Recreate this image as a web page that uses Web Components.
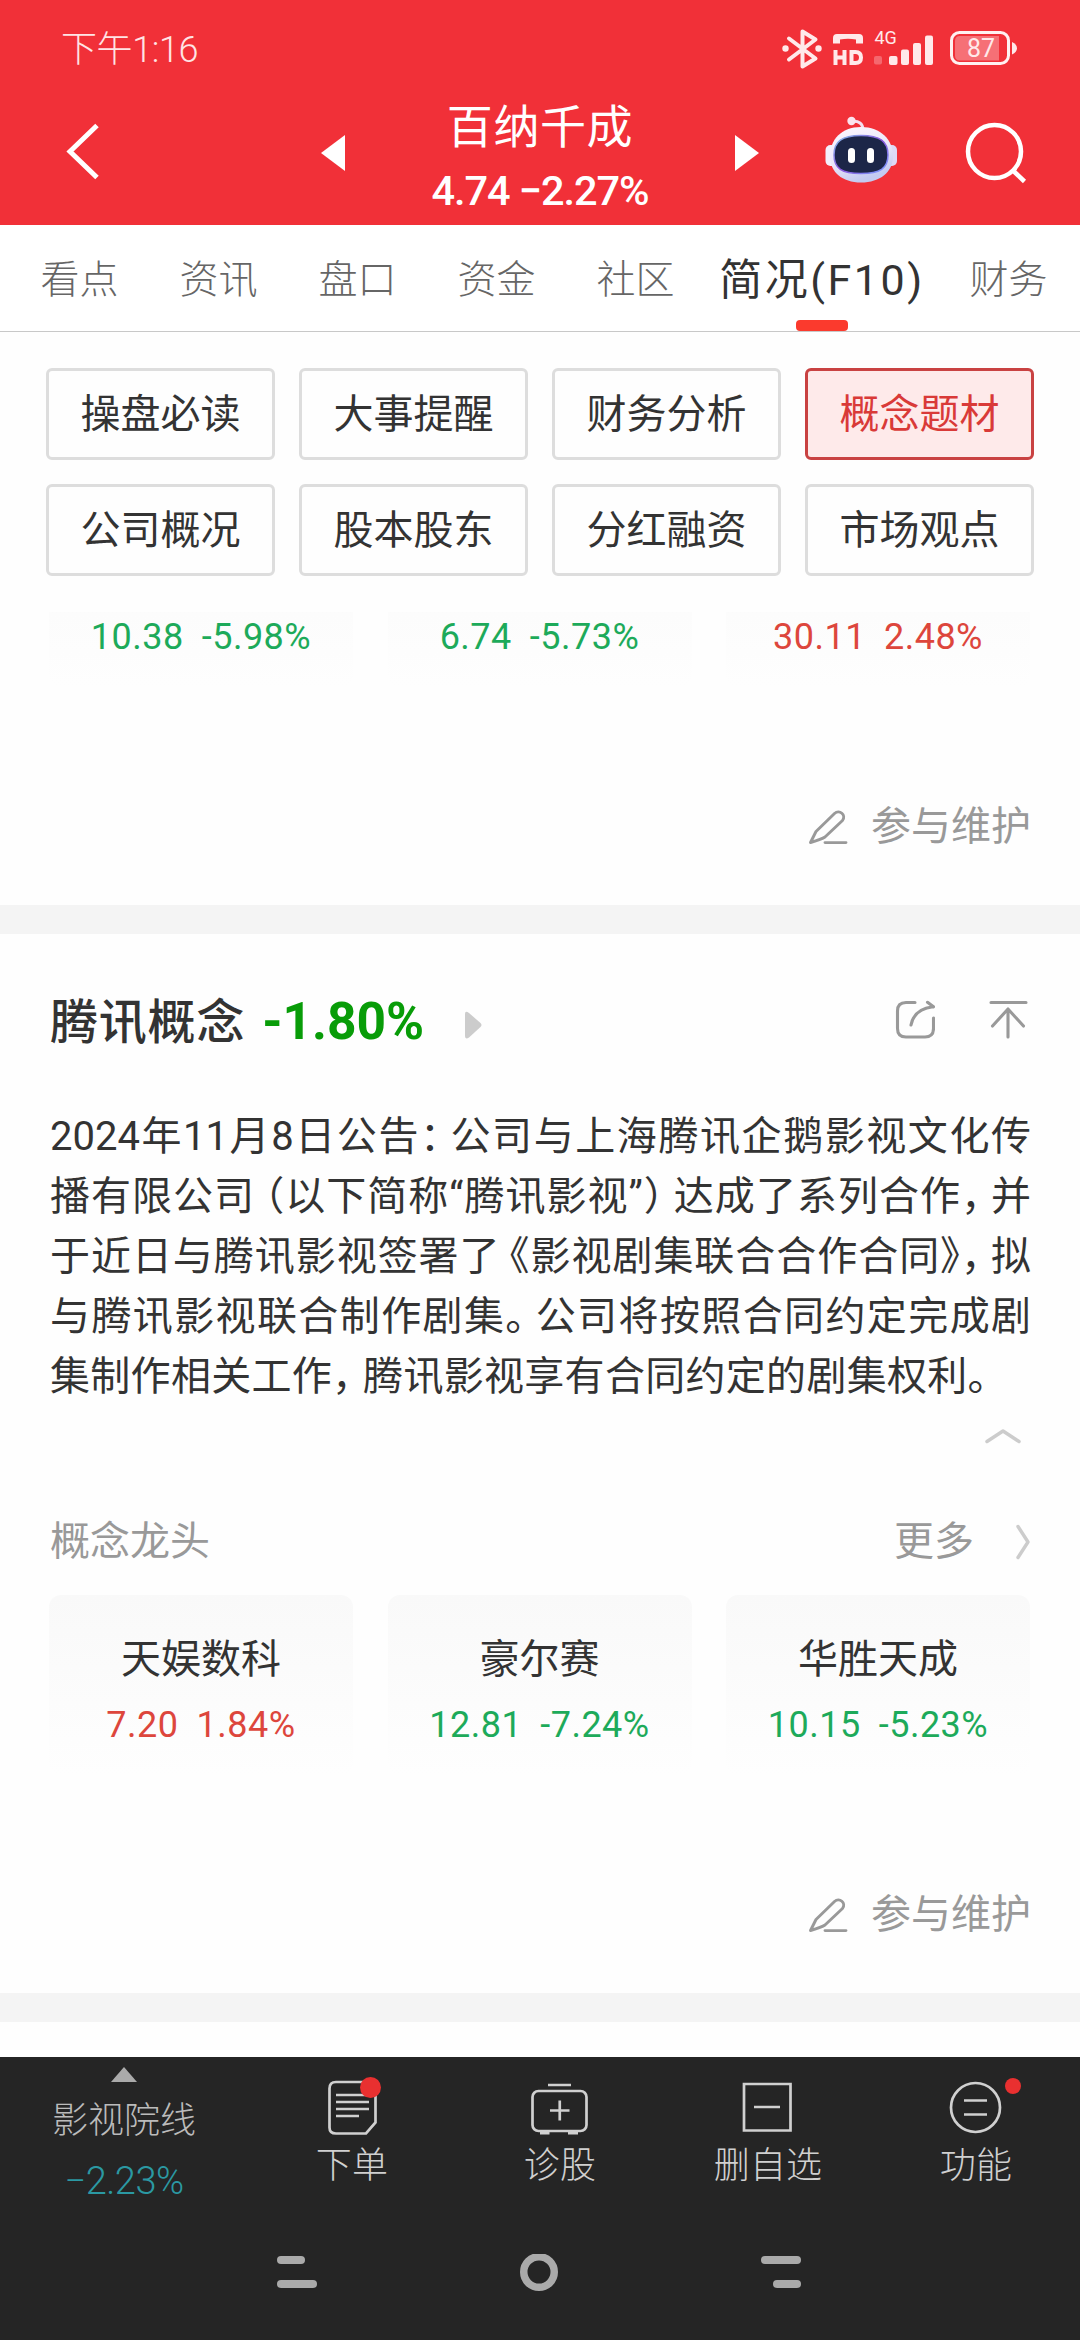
<!DOCTYPE html>
<html lang="zh-CN">
<head>
<meta charset="utf-8">
<title>百纳千成</title>
<style>
html,body{margin:0;padding:0}
body{width:1080px;height:2340px;overflow:hidden;background:#fefefe;color:#333;font-family:Roboto,"Noto Sans CJK SC",sans-serif}
</style>
</head>
<body>
<stock-app></stock-app>
<script>
const define = (name, html) => {
  const t = document.createElement('template');
  t.innerHTML = '<style>*{box-sizing:border-box}svg{display:block;flex:none}</style>' + html;
  customElements.define(name, class extends HTMLElement {
    constructor() {
      super();
      this.attachShadow({ mode: 'open' }).appendChild(t.content.cloneNode(true));
    }
  });
};

define('status-bar', `
<style>
:host{display:flex;height:98px;align-items:center;justify-content:space-between;padding:0 62px 0 61px;color:#ffe4e5;background:#f13038}
.time{font-size:36px;line-height:50px;font-weight:300;letter-spacing:-.4px;padding-top:1px}
text{font-family:Roboto,sans-serif}
</style>
<div class="time">下午1:16</div>
<svg width="236" height="44" viewBox="782 27 236 44" fill="#ffe9ea">
  <path d="M789 38.500 815.500 58.500 802.500 66.500V31.500L815.500 39.500 789 59.500" fill="none" stroke="#ffe9ea" stroke-width="4" stroke-linejoin="round" stroke-linecap="round"/>
  <circle cx="785.500" cy="48.500" r="3.200"/><circle cx="818.500" cy="48.500" r="3.200"/>
  <path d="M833 43.500V38q0-4 4-4h22q4 0 4 4v5.500h-7V39.500q-8-1.500-16 0v4z"/>
  <path d="M835.500 50v15M844.500 50v15M835.500 57.500h9M851.500 52v11h4q5.500 0 5.500-5.500t-5.500-5.500z" fill="none" stroke="#ffe9ea" stroke-width="4"/>
  <text x="874.500" y="43.500" font-size="18">4G</text>
  <rect x="874" y="56" width="8" height="8.500" rx="2" opacity=".3"/>
  <rect x="889" y="56" width="8.500" height="9" rx="2"/><rect x="901" y="49.500" width="8" height="15.500" rx="2"/><rect x="913" y="43" width="8" height="22" rx="2"/><rect x="925" y="35.500" width="8" height="29.500" rx="2"/>
  <rect x="951.500" y="32.500" width="57" height="31" rx="8" fill="none" stroke="#fff1f1" stroke-width="3"/>
  <path d="M955 41q0-5 5-5h39v24.500h-39q-5 0-5-5z" opacity=".35"/>
  <path d="M1012 42q5 2.500 5 6.300t-5 6.300z"/>
  <text x="967" y="57" font-size="25" textLength="28" lengthAdjust="spacingAndGlyphs">87</text>
</svg>`);

define('title-bar', `
<style>
:host{display:flex;height:127px;background:#f13038;color:#fff}
.back{width:321px;padding:23px 0 0 65px}
.prev{width:93px;padding-top:37px}
.mid{width:252px;padding-top:1px;text-align:center;white-space:nowrap}
.name{font-size:46px;line-height:56px;letter-spacing:.6px}
.price{font-size:41.500px;font-weight:500;line-height:60px;margin-top:6px;letter-spacing:-1.050px}
.next{width:92px;padding:37px 0 0 69px}
.robot{width:142px;padding:18px 0 0 66px}
.find{padding:24px 0 0 65px}
</style>
<div class="back"><svg width="36" height="62" viewBox="0 0 36 62" fill="none" stroke="#fff" stroke-width="5"><path d="M32 4.500 5 30.500l27 26"/></svg></div>
<div class="prev"><svg width="24" height="36"><path d="M24 0v36L0 18z" fill="#fff"/></svg></div>
<div class="mid"><div class="name">百纳千成</div><div class="price">4.74 −2.27%</div></div>
<div class="next"><svg width="24" height="36"><path d="M0 0v36l24-18z" fill="#fff"/></svg></div>
<div class="robot"><svg width="74" height="70" viewBox="824 116 74 70">
  <defs><linearGradient id="h" x1="0" y1="0" x2=".4" y2="1"><stop offset="0" stop-color="#fdf8ff"/><stop offset=".6" stop-color="#ebe6f8"/><stop offset="1" stop-color="#c3caf1"/></linearGradient>
  <linearGradient id="r" x1="0" y1="0" x2="1" y2="1"><stop offset="0" stop-color="#83bfe8"/><stop offset=".5" stop-color="#8a55dd"/><stop offset="1" stop-color="#7aa0ff"/></linearGradient></defs>
  <path d="M851 121.500q12-1.500 12 9" fill="none" stroke="#f4dff0" stroke-width="3"/><circle cx="851.500" cy="121" r="4.200" fill="#fbe3ee"/>
  <rect x="825.500" y="145" width="12" height="21" rx="5" fill="#f3effb"/><rect x="885" y="145" width="12" height="21" rx="5" fill="#ded9f6"/>
  <path d="M861 127c20 0 32 13 32 29s-13 26.500-32 26.500-31-10.500-31-26.500 11-29 31-29z" fill="url(#h)"/>
  <path d="M861 135.500c19 0 27 6 27 19.500s-8 18.500-27 18.500-27-5-27-18.500 8-19.500 27-19.500z" fill="#1c2648" stroke="url(#r)" stroke-width="1.500"/>
  <rect x="848" y="148" width="7" height="15" rx="3.500" fill="#fff"/><rect x="867" y="148" width="7" height="15" rx="3.500" fill="#fff"/>
</svg></div>
<div class="find"><svg width="62" height="62" viewBox="965 122 62 62" fill="none" stroke="#fff" stroke-width="4.500"><circle cx="994.500" cy="151.500" r="26.500"/><path d="M1013 170.500l11.500 11"/></svg></div>`);

define('nav-tab', `
<style>
:host{display:flex;flex-direction:column;align-items:center;width:139px;height:106px;padding-top:30px;font-size:39px;font-weight:300;line-height:50px;color:#666;white-space:nowrap}
:host([on]){width:234px;font-size:43px;font-weight:400;color:#333;letter-spacing:2.500px}
i{display:none;width:52px;height:11px;margin-top:15px;border-radius:4px;background:#fb3a2d}
:host([on]) i{display:block}
</style><slot></slot><i></i>`);

define('nav-tabs', `
<style>:host{display:flex;height:107px;padding-left:10px;border-bottom:1px solid #c8c8c8;background:#fff;overflow:hidden;box-sizing:border-box}
nav-tab{flex:none;box-sizing:border-box}</style>
<nav-tab>看点</nav-tab><nav-tab>资讯</nav-tab><nav-tab>盘口</nav-tab><nav-tab>资金</nav-tab><nav-tab>社区</nav-tab><nav-tab on>简况(F10)</nav-tab><nav-tab>财务</nav-tab>`);

define('menu-button', `
<style>
:host{display:block;width:229px;height:92px;border:3px solid #ddd;border-radius:6px;text-align:center;font-size:40px;line-height:88px;color:#333;box-sizing:border-box}
:host([on]){border-color:#c94242;background:#feeaea;color:#d93a38}
</style><slot></slot>`);

define('f10-menu', `
<style>:host{display:grid;height:280px;padding:36px 46px;grid-template-columns:repeat(4,229px);justify-content:space-between;row-gap:24px;background:#fefefe;box-sizing:border-box}</style>
<menu-button>操盘必读</menu-button><menu-button>大事提醒</menu-button><menu-button>财务分析</menu-button><menu-button on>概念题材</menu-button>
<menu-button>公司概况</menu-button><menu-button>股本股东</menu-button><menu-button>分红融资</menu-button><menu-button>市场观点</menu-button>`);

define('stock-card', `
<style>
:host{display:block;width:304px;height:180px;padding-top:35px;border-radius:12px;background:linear-gradient(#f9f9f9,#fefefe);text-align:center;color:#1daa5a;box-sizing:border-box}
:host([up]){color:#dd463c}
.n{height:60px;font-size:40px;line-height:60px;color:#333}
.p{display:flex;justify-content:center;gap:18px;margin-top:15px;font-size:36px;line-height:40px;letter-spacing:.5px}
</style>
<div class="n"><slot name="name"></slot></div>
<div class="p"><slot name="price"></slot><slot name="change"></slot></div>`);

define('card-row', `<style>:host{display:flex;justify-content:space-between;padding:0 50px 0 49px}</style><slot></slot>`);

define('maintain-link', `
<style>:host{display:flex;justify-content:flex-end;align-items:center;gap:23px;margin-top:110px;height:108px;padding:0 49px 48px 0;font-size:40px;line-height:60px;color:#999;box-sizing:border-box}</style>
<svg width="40" height="36" viewBox="0 0 40 36" fill="none" stroke="#999" stroke-width="2.900" stroke-linejoin="round" stroke-linecap="round"><path d="M2.500 33.500 8 22.500 26.500 4.500C31.500 0 38.500 6 34.500 11.500L17 28Q14 30 2.500 33.500zM17 33.600h21"/></svg>
<span>参与维护</span>`);

define('concept-head', `
<style>
:host{display:flex;align-items:center;height:64px;padding:0 52px 0 50px;margin-top:57px}
b{font-size:48px;font-weight:500;letter-spacing:.8px;line-height:64px}
.c{font-size:51.500px;font-weight:700;letter-spacing:0;line-height:60px;color:#089c08;margin:-2px auto 0 17px;display:flex;align-items:center;gap:41px}
.c svg{margin-top:6px}
.i{display:flex;gap:54px;margin-top:-6px}
</style>
<b><slot></slot></b>
<div class="c"><slot name="change"></slot><svg width="17" height="28"><path d="M0 3Q0-1 4 2L15.500 12Q17.500 14 15.500 16L4 26.500Q0 29 0 25z" fill="#ccc"/></svg></div>
<div class="i" >
<svg width="40" height="40" viewBox="895 1000 40 40" fill="none" stroke="#999" stroke-width="3.100" stroke-linecap="round" stroke-linejoin="round"><path d="M915 1002.500h-9q-8.500 0-8.500 8.500v17.500q0 8.500 8.500 8.500h19q8.500 0 8.500-8.500V1018M911 1025q3-16 22-18.200M927.500 1002.300l6 4.500"/></svg>
<svg width="39" height="40" viewBox="989 1000 39 40" fill="none" stroke="#999" stroke-width="3.100" stroke-linecap="round" stroke-linejoin="round"><path d="M991 1002.500h35M992.500 1026l15.500-17 15.500 17M1008 1009.500V1037"/></svg>
</div>`);

define('notice-text', `
<style>
:host{display:block;margin-top:52px;padding:0 49px 0 50px;font-size:40px;line-height:60px;color:#333;font-feature-settings:"halt"}
p{margin:0;height:60px;text-align:justify;text-align-last:justify;white-space:nowrap}
p.end{text-align-last:left;letter-spacing:.3px}
s{text-decoration:none;letter-spacing:9px}
.end s{letter-spacing:11px}
u{text-decoration:none;margin-left:9px}
.t{letter-spacing:0}
.up{display:flex;justify-content:flex-end;align-items:center;height:57px;padding-right:10px}
</style>
<p>2024年11月8日公告<s>：</s>公司与上海腾讯企鹅影视文化传</p>
<p>播有限公司<u>（</u>以下简称“腾讯影视”<s>）</s>达成了系列合作<s>，</s>并</p>
<p>于近日与腾讯影视签署了<u>《</u>影视剧集联合合作合同<s class="t">》</s><s>，</s>拟</p>
<p>与腾讯影视联合制作剧集<s>。</s>公司将按照合同约定完成剧</p>
<p class="end">集制作相关工作<s>，</s>腾讯影视享有合同约定的剧集权利<s>。</s></p>
<div class="up"><svg width="36" height="16" viewBox="0 0 36 16" fill="none" stroke="#ccc" stroke-width="3.500" stroke-linecap="round" stroke-linejoin="round"><path d="M2 13.500 18 3l16 10.500"/></svg></div>`);

define('leaders-head', `
<style>:host{display:flex;align-items:center;height:60px;margin:48px 0 23px;padding:0 50px;font-size:40px;line-height:60px;color:#999}
.a{margin-right:auto}svg{margin-left:42px}</style>
<span class="a">概念龙头</span><span>更多</span>
<svg width="14" height="36" viewBox="0 0 14 36" fill="none" stroke="#ccc" stroke-width="3.400" stroke-linecap="round" stroke-linejoin="round"><path d="M2 2.500 12 18 2 33.500"/></svg>`);

define('section-gap', `<style>:host{display:block;height:29px;background:#f4f4f4}</style>`);

define('page-content', `
<style>:host{display:block;height:1445px;overflow:hidden;background:#fefefe}.first{margin-top:-105px}.rest{height:1059px;overflow:hidden}</style>
<div class="first">
<card-row>
<stock-card><span slot="price">10.38</span><span slot="change">-5.98%</span></stock-card>
<stock-card><span slot="price">6.74</span><span slot="change">-5.73%</span></stock-card>
<stock-card up><span slot="price">30.11</span><span slot="change">2.48%</span></stock-card>
</card-row>
<maintain-link></maintain-link>
</div>
<section-gap></section-gap>
<div class="rest">
<concept-head>腾讯概念<span slot="change">-1.80%</span></concept-head>
<notice-text></notice-text>
<leaders-head></leaders-head>
<card-row>
<stock-card up><span slot="name">天娱数科</span><span slot="price">7.20</span><span slot="change">1.84%</span></stock-card>
<stock-card><span slot="name">豪尔赛</span><span slot="price">12.81</span><span slot="change">-7.24%</span></stock-card>
<stock-card><span slot="name">华胜天成</span><span slot="price">10.15</span><span slot="change">-5.23%</span></stock-card>
</card-row>
<maintain-link></maintain-link>
</div>
<section-gap></section-gap>`);

define('tool-item', `
<style>:host{display:flex;flex-direction:column;align-items:center;width:208px;font-size:36px;font-weight:300;line-height:48px;letter-spacing:.2px;color:#d0d0d0;padding-top:19px;box-sizing:border-box}
.t{margin-top:4px}</style><slot name="icon"></slot><div class="t"><slot></slot></div>`);

define('tool-bar', `
<style>
:host{display:flex;height:148px;background:#252525}
.idx{width:248px;padding-top:10px;display:flex;flex-direction:column;align-items:center;font-size:36px;font-weight:300;line-height:48px;color:#bbb}
.idx .n{margin-top:15px}.idx .v{margin-top:9px;font-size:38px;line-height:54px;letter-spacing:-.5px;color:#2b99a3}
svg{display:block;fill:none;stroke:#d0d0d0;stroke-width:2.700}
.r{fill:#e93030;stroke:none}
</style>
<div class="idx"><svg width="26" height="15"><path d="M13 0 26 15H0z" fill="#aaa" stroke="none"/></svg><div class="n">影视院线</div><div class="v">−2.23%</div></div>
<tool-item><svg slot="icon" width="64" height="62" viewBox="320 2076 64 62"><path d="M336 2082h33q6.500 0 6.500 6v34.500L366 2133.500h-30q-6.500 0-6.500-6V2088.500q0-6.500 6.500-6.500zM336 2095h33M336 2102h33M336 2109h33M336 2116h23"/><circle class="r" cx="370.500" cy="2087.500" r="10.500"/></svg>下单</tool-item>
<tool-item><svg slot="icon" width="64" height="62" viewBox="528 2076 64 62"><rect x="532.500" y="2091" width="54" height="40" rx="6"/><path d="M548 2085h23M550 2110.500h19.500M559.750 2100.500v20"/><path d="M540 2133h9.500M568 2133h10" stroke-width="3"/></svg>诊股</tool-item>
<tool-item><svg slot="icon" width="64" height="62" viewBox="736 2076 64 62"><path d="M744 2084h46.500v46.500H744zM754 2107h26"/></svg>删自选</tool-item>
<tool-item><svg slot="icon" width="78" height="62" viewBox="937 2076 78 62" style="overflow:visible"><circle cx="975.500" cy="2107.500" r="24.500"/><path d="M964 2100.500h23M964 2114.500h23"/><circle class="r" cx="1013" cy="2086" r="8"/></svg>功能</tool-item>`);

define('system-nav', `
<style>:host{display:flex;height:135px;padding:49px 279px 0 277px;justify-content:space-between;background:#252525;box-sizing:border-box}</style>
<svg width="40" height="36" fill="#aaa"><rect y="2" width="28" height="8" rx="4"/><rect y="26" width="40" height="8" rx="4"/></svg>
<svg width="38" height="38" viewBox="0 0 38 38" fill="none" stroke="#aaa" stroke-width="7.500"><circle cx="19" cy="18" r="15.250"/></svg>
<svg width="40" height="36" fill="#aaa"><rect y="2" width="40" height="8" rx="4"/><rect x="12" y="26" width="28" height="8" rx="4"/></svg>`);

define('stock-app', `
<style>:host{display:flex;flex-direction:column;width:1080px;height:2340px;overflow:hidden}:host>*{flex:none}</style>
<status-bar></status-bar><title-bar></title-bar><nav-tabs></nav-tabs><f10-menu></f10-menu><page-content></page-content><tool-bar></tool-bar><system-nav></system-nav>`);
</script>
</body>
</html>
